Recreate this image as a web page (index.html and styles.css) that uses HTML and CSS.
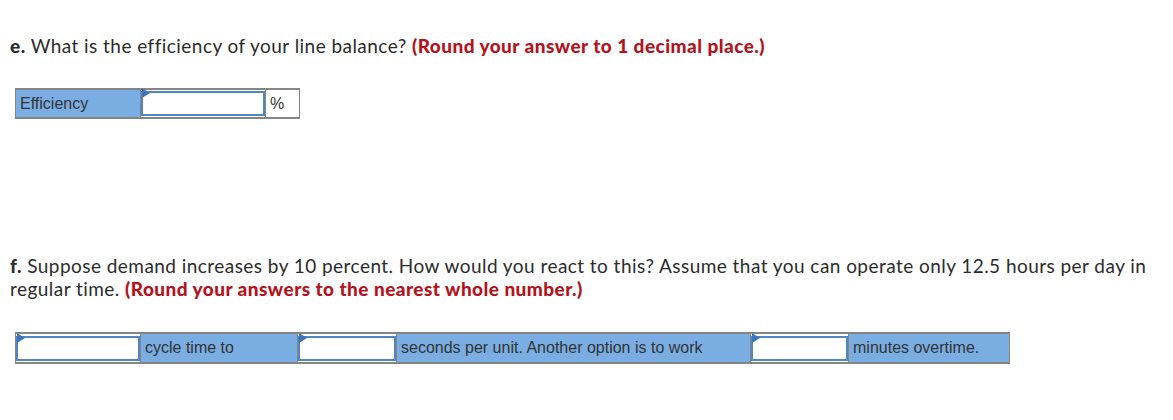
FILE: index.html
```html
<!DOCTYPE html>
<html>
<head>
<meta charset="utf-8">
<link rel="stylesheet" href="styles.css">
</head>
<body>
<div class="page">
  <p class="q q-e"><b>e.</b> What is the efficiency of your line balance? <span class="hint">(Round your answer to 1 decimal place.)</span></p>
  <table class="grid grid-e">
    <tr>
      <td class="lbl w125">Efficiency</td>
      <td class="inp w125"><div class="box"><span class="flag"></span></div></td>
      <td class="plain w34">%</td>
    </tr>
  </table>
  <p class="q q-f"><b>f.</b> Suppose demand increases by 10 percent. How would you react to this? Assume that you can operate only 12.5 hours per day in regular time. <span class="hint">(Round your answers to the nearest whole number.)</span></p>
  <table class="grid grid-f">
    <tr>
      <td class="inp w125"><div class="box"><span class="flag"></span></div></td>
      <td class="lbl w157">cycle time to</td>
      <td class="inp w99"><div class="box"><span class="flag"></span></div></td>
      <td class="lbl w354">seconds per unit. Another option is to work</td>
      <td class="inp w98"><div class="box"><span class="flag"></span></div></td>
      <td class="lbl w161">minutes overtime.</td>
    </tr>
  </table>
</div>
</body>
</html>
```

FILE: styles.css
```css
html, body { margin: 0; padding: 0; background: #fff; }
.page {
  padding: 0 10px;
  width: 1150px;
  font-family: "Lato", "Open Sans", sans-serif;
  color: #2b2b2b;
}
.q {
  margin: 0;
  font-size: 19px;
  line-height: 23px;
  letter-spacing: 0.45px;
}
.q b { font-weight: 900; }
.hint { color: #b5121b; font-weight: 900; }
.q-e { padding-top: 34px; }
.grid {
  border-collapse: collapse;
  font-family: "Liberation Sans", Arial, sans-serif;
  font-size: 16px;
  color: #333;
  margin-left: 5px;
}
.grid-e { margin-top: 31px; }
.q-f { margin-top: 135px; }
.grid-f { margin-top: 32px; }
.grid td {
  border: 1px solid #858585;
  padding: 0;
  height: 29px;
  box-sizing: border-box;
  vertical-align: middle;
}
.grid-e td { border-top-width: 2px; border-bottom-width: 2px; }
.grid-f td { border-top-width: 2px; border-bottom-width: 2px; height: 30px; }
.lbl { background: #7aaee3; padding: 0 0 0 4px !important; }
.plain { background: #fff; padding: 0 0 0 4px !important; }
.inp { background: #fff; }
.box {
  position: relative;
  height: 25px;
  border: 2px solid #4f86c6;
  box-sizing: border-box;
  background: #fff;
}
.flag {
  position: absolute;
  left: -1px;
  top: -1px;
  width: 0;
  height: 0;
  border-top: 5px solid transparent;
  border-bottom: 5px solid transparent;
  border-left: 8px solid #3d74bb;
  margin-top: -4px;
}
.w125 { width: 125px; }
.w157 { width: 157px; }
.w99 { width: 99px; }
.w354 { width: 354px; }
.w98 { width: 98px; }
.w161 { width: 161px; }
.w34 { width: 34px; }
```
